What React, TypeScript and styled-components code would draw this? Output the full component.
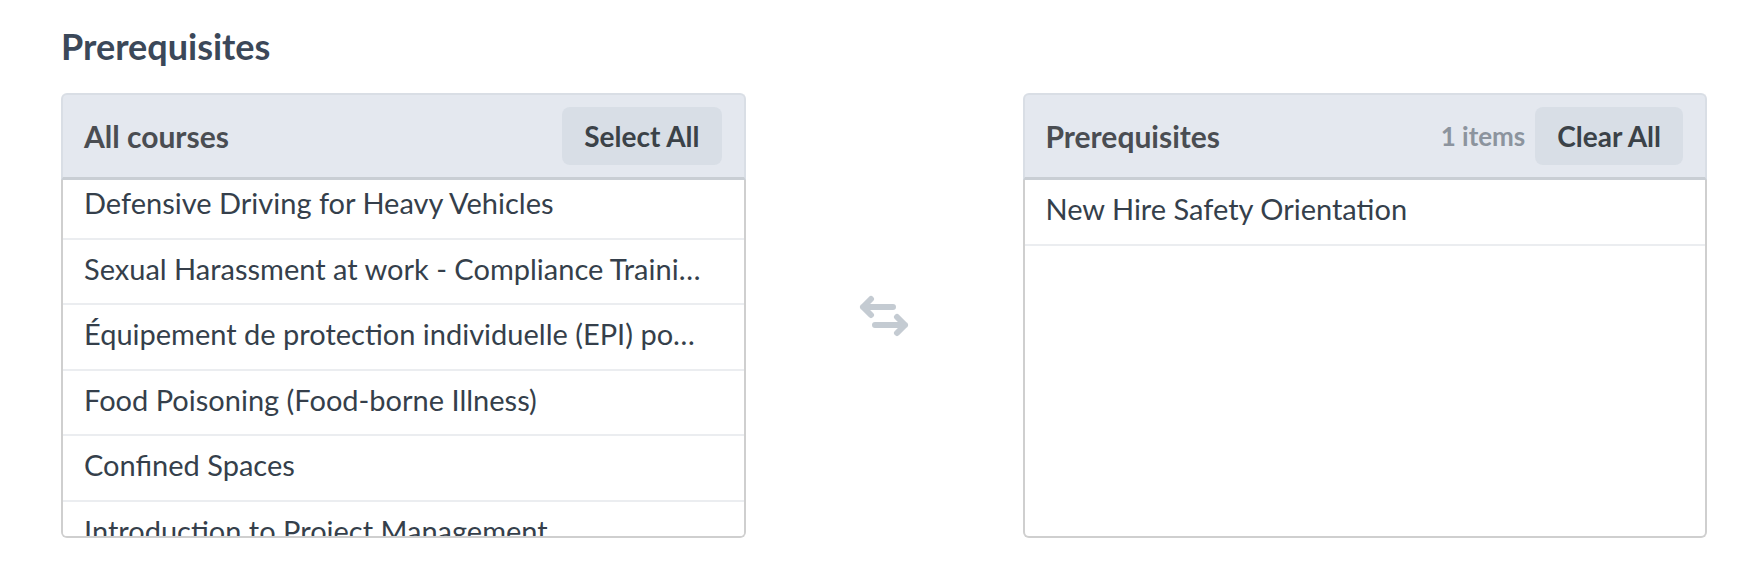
import React, { useLayoutEffect, useRef } from "react";
import styled, { createGlobalStyle } from "styled-components";

const Global = createGlobalStyle`
  html, body { margin: 0; padding: 0; background: #ffffff; }
  body { font-family: Lato, "Noto Sans", sans-serif; -webkit-font-smoothing: antialiased; }
  * { box-sizing: border-box; }
`;

const Page = styled.div`
  padding: 22px 49px 0 61px;
`;

const Heading = styled.h2`
  margin: 0 0 23px;
  font-size: 36px;
  line-height: 48px;
  font-weight: 700;
  color: #3b4859;
`;

const Layout = styled.div`
  display: grid;
  grid-template-columns: 1fr 277px 1fr;
  height: 445px;
`;

const Panel = styled.section`
  display: flex;
  flex-direction: column;
  min-width: 0;
  min-height: 0;
  height: 445px;
`;

const PanelHeader = styled.header`
  display: flex;
  flex: none;
  align-items: center;
  gap: 10px;
  height: 87px;
  padding: 0 22px 0 21px;
  background: #e4e8ef;
  border: 2px solid #d9dee5;
  border-bottom: 3px solid #c9ced4;
  border-radius: 6px 6px 0 0;
`;

const PanelTitle = styled.span`
  flex: 1;
  font-size: 30px;
  font-weight: 700;
  color: #4a4d52;
`;

const Count = styled.span`
  font-size: 26px;
  font-weight: 700;
  color: #8c949e;
`;

const HeaderButton = styled.button`
  height: 58px;
  padding: 0 22px;
  border: none;
  border-radius: 8px;
  background: #d8dee6;
  font-family: inherit;
  font-size: 28px;
  font-weight: 700;
  color: #3b4248;
  cursor: pointer;
`;

const List = styled.ul`
  flex: 1;
  min-height: 0;
  margin: 0;
  padding: 0;
  list-style: none;
  overflow-y: auto;
  scrollbar-width: none;
  background: #ffffff;
  border: 2px solid #cfcfcf;
  border-top: none;
  border-radius: 0 0 6px 6px;
  &::-webkit-scrollbar { display: none; }
`;

const Row = styled.li`
  height: 65.5px;
  padding: 0 36px 6px 21px;
  line-height: 57.5px;
  border-bottom: 2px solid #ebedf0;
  font-size: 29px;
  color: #353f4b;
  white-space: nowrap;
  overflow: hidden;
  text-overflow: ellipsis;
`;

const Middle = styled.div`
  display: flex;
  align-items: center;
  justify-content: center;
  padding-right: 1px;
`;

const SwapIcon = () => (
  <svg width="52" height="42" viewBox="0 0 52 42" fill="none" stroke="#c4cbd2" strokeWidth="6" strokeLinecap="round" strokeLinejoin="round">
    <path d="M35 12H5M13 4L5 12L13 20" />
    <path d="M17 30H47M39 22L47 30L39 38" />
  </svg>
);

const allCourses = [
  "Defensive Driving for Heavy Vehicles",
  "Sexual Harassment at work - Compliance Training",
  "Équipement de protection individuelle (EPI) pour les travailleurs",
  "Food Poisoning (Food-borne Illness)",
  "Confined Spaces",
  "Introduction to Project Management",
  "Working at Heights",
  "Fire Safety Awareness",
];

const selected = ["New Hire Safety Orientation"];

export default function App() {
  const listRef = useRef<HTMLUListElement>(null);
  useLayoutEffect(() => {
    if (listRef.current) listRef.current.scrollTop = 6;
  }, []);
  return (
    <>
      <Global />
      <Page>
        <Heading>Prerequisites</Heading>
        <Layout>
          <Panel>
            <PanelHeader>
              <PanelTitle>All courses</PanelTitle>
              <HeaderButton>Select All</HeaderButton>
            </PanelHeader>
            <List ref={listRef}>
              {allCourses.map((c) => (
                <Row key={c}>{c}</Row>
              ))}
            </List>
          </Panel>
          <Middle>
            <SwapIcon />
          </Middle>
          <Panel>
            <PanelHeader>
              <PanelTitle>Prerequisites</PanelTitle>
              <Count>1 items</Count>
              <HeaderButton>Clear All</HeaderButton>
            </PanelHeader>
            <List>
              {selected.map((c) => (
                <Row key={c}>{c}</Row>
              ))}
            </List>
          </Panel>
        </Layout>
      </Page>
    </>
  );
}
